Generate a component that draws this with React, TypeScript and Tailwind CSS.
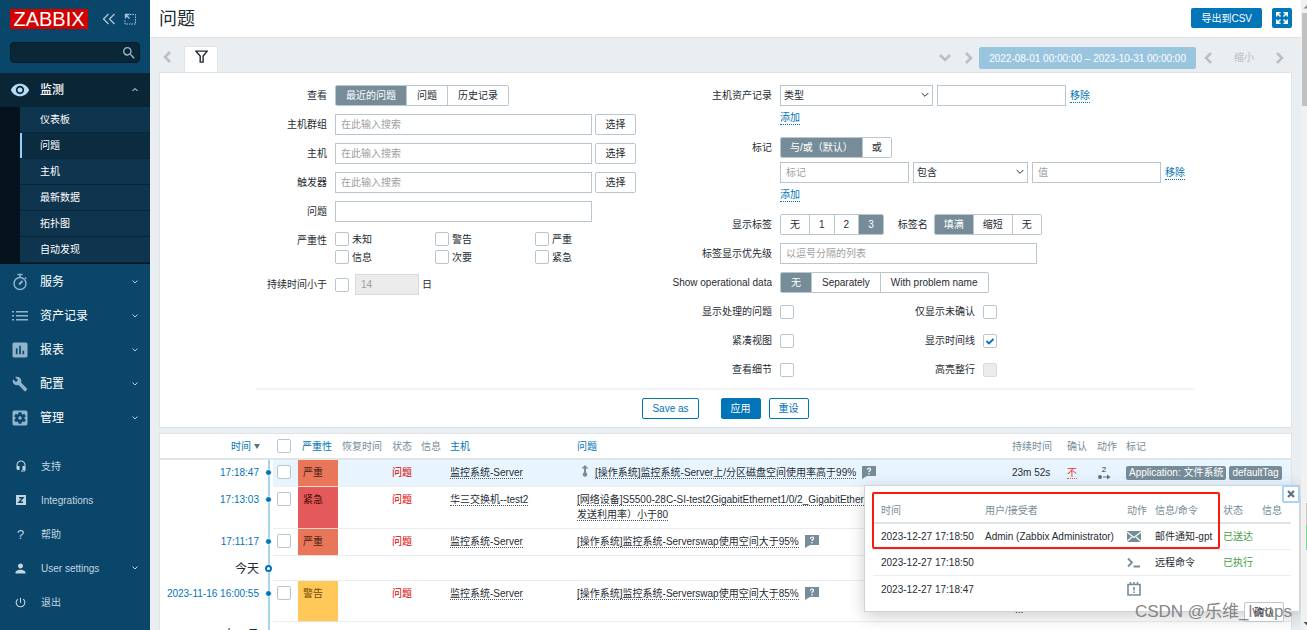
import type { ReactNode } from "react";
import {
  MdBuild,
  MdHeadsetMic,
  MdInsertChart,
  MdPerson,
  MdPowerSettingsNew,
  MdRemoveRedEye,
  MdSearch,
  MdSettingsApplications,
} from "react-icons/md";

type ChevronProps = {
  dir: "up" | "down" | "left" | "right";
  className?: string;
  strokeWidth?: number;
};

const chevronPaths = {
  up: "M1 8l5-5 5 5",
  down: "M1 3l5 5 5-5",
  left: "M8 1L3 6l5 5",
  right: "M4 1l5 5-5 5",
};

function Chevron({ dir, className, strokeWidth = 2 }: ChevronProps) {
  return (
    <svg viewBox="0 0 12 12" className={className} fill="none" stroke="currentColor" strokeWidth={strokeWidth}>
      <path d={chevronPaths[dir]} />
    </svg>
  );
}

const subMenu = ["仪表板", "问题", "主机", "最新数据", "拓扑图", "自动发现"];

const mainMenu = [
  {
    name: "服务",
    icon: (
      <svg viewBox="0 0 18 18" className="h-[18px] w-[18px]" fill="none" stroke="currentColor" strokeWidth="1.5">
        <circle cx="9" cy="10.5" r="6" />
        <path d="M6.5 1.5h5M9 1.5v3M14 4.5l1.2 1.2" />
        <path d="M8 11.5l3.5-3.5" strokeWidth="2" />
      </svg>
    ),
  },
  {
    name: "资产记录",
    icon: (
      <svg viewBox="0 0 18 18" className="h-[18px] w-[18px]" fill="currentColor">
        <path d="M1 4h2v1.5H1zM5 4h12v1.5H5zM1 8h2v1.5H1zM5 8h12v1.5H5zM1 12h2v1.5H1zM5 12h12v1.5H5z" />
      </svg>
    ),
  },
  { name: "报表", icon: <MdInsertChart className="h-5 w-5" /> },
  { name: "配置", icon: <MdBuild className="h-4 w-4" /> },
  { name: "管理", icon: <MdSettingsApplications className="h-5 w-5" /> },
];

const userMenu = [
  { name: "支持", icon: <MdHeadsetMic className="h-3 w-3" /> },
  {
    name: "Integrations",
    icon: (
      <svg viewBox="0 0 10 10" className="h-[10px] w-[10px]">
        <rect width="10" height="10" fill="currentColor" />
        <path d="M3 2.8h4L3 7.2h4" fill="none" stroke="#0a466a" strokeWidth="1.4" />
      </svg>
    ),
  },
  { name: "帮助", icon: <span className="text-[13px]">?</span> },
  { name: "User settings", icon: <MdPerson className="h-[15px] w-[15px]" />, open: true },
  { name: "退出", icon: <MdPowerSettingsNew className="h-[13px] w-[13px]" /> },
];

function Sidebar() {
  return (
    <aside className="w-[150px] shrink-0 bg-[#0a466a] text-white">
      <div className="flex h-[38px] items-center pl-[10px]">
        <a href="#" className="flex h-5 w-[78px] items-center justify-center bg-[#d40000] text-[20px] leading-5">
          ZABBIX
        </a>
        <button type="button" aria-label="收起" className="ml-[14px] text-[#a9c6d8]">
          <svg viewBox="0 0 14 12" className="h-3 w-[14px]" fill="none" stroke="currentColor" strokeWidth="1.3">
            <path d="M6.5 1L1.5 6l5 5M12.5 1l-5 5 5 5" />
          </svg>
        </button>
        <button type="button" aria-label="隐藏" className="ml-2 text-[#a9c6d8]">
          <svg viewBox="0 0 12 12" className="h-3 w-3" fill="none" stroke="currentColor">
            <path d="M6 1.5h5.5V11H1V7" strokeDasharray="1.5 1" />
            <path d="M1.5 5.5v-4h4M1.5 1.5l4 4" strokeWidth="1.3" />
          </svg>
        </button>
      </div>

      <div className="mx-[10px] mt-1 flex h-[21px] items-center rounded-sm border border-[#061b28] bg-[#0a2738]">
        <input type="text" aria-label="搜索" className="h-full min-w-0 flex-1 bg-transparent px-1 text-[10px] outline-none" />
        <button type="button" aria-label="搜索" className="mr-[2px] text-[#9ab9cb]">
          <MdSearch className="h-4 w-4" />
        </button>
      </div>

      <nav className="mt-[10px]">
        <a href="#" className="flex h-[34px] items-center bg-[#0a2535]">
          <span className="flex w-10 justify-center text-[#b5dcf5]">
            <MdRemoveRedEye className="h-5 w-5" />
          </span>
          <span className="flex-1 text-xs font-medium">监测</span>
          <Chevron dir="up" className="mr-3 h-[6px] w-[6px]" />
        </a>
        <ul className="bg-[#03121c] pb-px pl-5">
          {subMenu.map((item) => (
            <li key={item} className="border-b border-[#0a2535]">
              {item === "问题" ? (
                <a href="#" className="flex h-[25px] items-center border-l-2 border-[#8fd0ff] bg-[#0a2b40] pl-[18px] text-[10px]">
                  {item}
                </a>
              ) : (
                <a href="#" className="flex h-[25px] items-center bg-[#0f344e] pl-5 text-[10px]">
                  {item}
                </a>
              )}
            </li>
          ))}
        </ul>
        <div className="pt-px">
          {mainMenu.map((item) => (
            <a key={item.name} href="#" className="flex h-[34px] items-center">
              <span className="flex w-10 justify-center text-[#8fb4cc]">{item.icon}</span>
              <span className="flex-1 text-xs">{item.name}</span>
              <Chevron dir="down" className="mr-3 h-[6px] w-[6px] text-[#b5ccd9]" />
            </a>
          ))}
        </div>
      </nav>

      <nav className="mt-[14px] text-[#c3d5e0]">
        {userMenu.map((item) => (
          <a key={item.name} href="#" className="flex h-[34px] items-center">
            <span className="flex w-[41px] justify-center">{item.icon}</span>
            <span className="flex-1 text-[10px]">{item.name}</span>
            {item.open && <Chevron dir="down" className="mr-3 h-[6px] w-[6px]" />}
          </a>
        ))}
      </nav>
    </aside>
  );
}

function CheckBox({ id, label, checked, disabled }: { id?: string; label?: string; checked?: boolean; disabled?: boolean }) {
  return (
    <span className="relative flex h-[14px] w-[14px] shrink-0">
      <input
        id={id}
        type="checkbox"
        aria-label={label}
        defaultChecked={checked}
        disabled={disabled}
        className="peer h-[14px] w-[14px] appearance-none rounded-[2px] border border-[#b9c6cd] bg-white disabled:border-[#d5dce0] disabled:bg-[#ebebeb]"
      />
      <svg
        viewBox="0 0 14 14"
        className="pointer-events-none absolute inset-0 hidden h-[14px] w-[14px] text-[#0275b8] peer-checked:block"
        fill="none"
        stroke="currentColor"
        strokeWidth="1.8"
      >
        <path d="M3.5 7L6 9.5 10.500 5" />
      </svg>
    </span>
  );
}

function Segments({ name, options, value, compact }: { name: string; options: string[]; value: number; compact?: boolean }) {
  return (
    <div role="radiogroup" aria-label={name} className="flex h-[21px] divide-x divide-[#b9c6cd] overflow-hidden rounded-[2px] border border-[#b9c6cd]">
      {options.map((option, i) => (
        <label
          key={option}
          className={`relative flex items-center bg-white has-checked:bg-[#768d99] has-checked:text-white ${compact ? "px-[9px]" : "px-[10px]"}`}
        >
          <input type="radio" name={name} defaultChecked={i === value} className="sr-only" />
          {option}
        </label>
      ))}
    </div>
  );
}

function TextBox({ id, label, placeholder, className }: { id?: string; label?: string; placeholder?: string; className: string }) {
  return (
    <input
      id={id}
      type="text"
      aria-label={label}
      placeholder={placeholder}
      className={`h-[21px] border border-[#b9c6cd] bg-white px-[5px] placeholder:text-[#a0a0a0] ${className}`}
    />
  );
}

function SelectBox({ label, option, className }: { label: string; option: string; className: string }) {
  return (
    <div className={`relative ${className}`}>
      <select aria-label={label} className="h-[21px] w-full appearance-none border border-[#b9c6cd] bg-white px-[3px]">
        <option>{option}</option>
      </select>
      <Chevron dir="down" strokeWidth={1.5} className="pointer-events-none absolute right-1 top-[6px] h-2 w-2" />
    </div>
  );
}

function TextLink({ children }: { children: ReactNode }) {
  return (
    <a href="#" className="border-b border-dotted border-[#0275b8] leading-[13px] text-[#0275b8]">
      {children}
    </a>
  );
}

function Row({ label, htmlFor, children }: { label: string; htmlFor?: string; children: ReactNode }) {
  return (
    <div className="flex">
      <label htmlFor={htmlFor} className="mr-2 flex h-[21px] w-[132px] shrink-0 items-center justify-end">
        {label}
      </label>
      {children}
    </div>
  );
}

const severities = ["未知", "警告", "严重", "信息", "次要", "紧急"];
const pickers = [
  { id: "groups", label: "主机群组" },
  { id: "hosts", label: "主机" },
  { id: "triggers", label: "触发器" },
];
const options = [
  { id: "suppressed", label: "显示处理的问题", id2: "unack", label2: "仅显示未确认" },
  { id: "compact", label: "紧凑视图", id2: "timeline", label2: "显示时间线", checked: true },
  { id: "details", label: "查看细节", id2: "highlight", label2: "高亮整行", disabled: true },
];

function FilterPanel() {
  return (
    <section className="mx-[9px] border border-[#dfe4e7] bg-white">
      <div className="flex pt-3">
        <div className="flex w-[480px] shrink-0 flex-col gap-2 pl-[35px]">
          <Row label="查看">
            <Segments name="查看" options={["最近的问题", "问题", "历史记录"]} value={0} />
          </Row>
          {pickers.map((picker) => (
            <Row key={picker.id} label={picker.label} htmlFor={picker.id}>
              <TextBox id={picker.id} placeholder="在此输入搜索" className="w-[257px]" />
              <button type="button" className="ml-[3px] h-[21px] w-[41px] rounded-[2px] border border-[#b9c6cd]">
                选择
              </button>
            </Row>
          ))}
          <Row label="问题" htmlFor="problem">
            <TextBox id="problem" className="w-[257px]" />
          </Row>
          <Row label="严重性">
            <div className="grid grid-cols-[100px_100px_60px]">
              {severities.map((severity) => (
                <label key={severity} className="flex h-[18px] items-center gap-[3px]">
                  <CheckBox />
                  {severity}
                </label>
              ))}
            </div>
          </Row>
          <Row label="持续时间小于" htmlFor="age">
            <div className="flex items-center">
              <CheckBox id="age" />
              <input
                type="text"
                aria-label="日"
                disabled
                defaultValue="14"
                className="ml-[6px] mr-[3px] h-[21px] w-16 border border-[#d5dce0] bg-[#ebebeb] px-[5px] text-[#a0a0a0]"
              />
              日
            </div>
          </Row>
        </div>

        <div className="flex flex-1 flex-col gap-2">
          <Row label="主机资产记录">
            <div>
              <div className="flex items-center gap-1">
                <SelectBox label="主机资产记录" option="类型" className="w-[153px]" />
                <TextBox label="资产值" className="w-[129px]" />
                <TextLink>移除</TextLink>
              </div>
              <div className="flex h-[23px] items-center">
                <TextLink>添加</TextLink>
              </div>
            </div>
          </Row>
          <Row label="标记">
            <div>
              <div className="mb-1 flex">
                <Segments name="标记" options={["与/或（默认）", "或"]} value={0} compact />
              </div>
              <div className="flex items-center gap-1">
                <TextBox label="标记" placeholder="标记" className="w-[129px]" />
                <SelectBox label="运算符" option="包含" className="w-[115px]" />
                <TextBox label="值" placeholder="值" className="w-[129px]" />
                <TextLink>移除</TextLink>
              </div>
              <div className="flex h-[23px] items-center">
                <TextLink>添加</TextLink>
              </div>
            </div>
          </Row>
          <Row label="显示标签">
            <Segments name="显示标签" options={["无", "1", "2", "3"]} value={3} compact />
            <span className="ml-[14px] mr-[6px] flex items-center">标签名</span>
            <Segments name="标签名" options={["填满", "缩短", "无"]} value={0} compact />
          </Row>
          <Row label="标签显示优先级" htmlFor="priority">
            <TextBox id="priority" placeholder="以逗号分隔的列表" className="w-[257px]" />
          </Row>
          <Row label="Show operational data">
            <Segments name="Show operational data" options={["无", "Separately", "With problem name"]} value={0} />
          </Row>
          {options.map((option) => (
            <Row key={option.id} label={option.label} htmlFor={option.id}>
              <div className="flex items-center">
                <CheckBox id={option.id} />
                <label htmlFor={option.id2} className="mr-2 w-[181px] text-right">
                  {option.label2}
                </label>
                <CheckBox id={option.id2} checked={option.checked} disabled={option.disabled} />
              </div>
            </Row>
          ))}
        </div>
      </div>

      <div className="mx-24 mt-2 flex justify-center border-t-2 border-[#f2f4f5] pb-2 pt-2">
        <button type="button" className="mr-[22px] h-[21px] rounded-[2px] border border-[#0275b8] px-[9px] text-[#0275b8]">
          Save as
        </button>
        <button type="button" className="mr-2 h-[21px] rounded-[2px] border border-[#0275b8] bg-[#0275b8] px-[9px] text-white">
          应用
        </button>
        <button type="button" className="h-[21px] rounded-[2px] border border-[#0275b8] px-[9px] text-[#0275b8]">
          重设
        </button>
      </div>
    </section>
  );
}

type Problem = {
  time: string;
  severity: string;
  severityStyles: string;
  host: string;
  lines: string[];
  active?: boolean;
  help?: boolean;
  tall?: boolean;
};

const problems: Problem[] = [
  {
    time: "17:18:47",
    severity: "严重",
    severityStyles: "bg-[#e97659] text-[#4b2418]",
    host: "监控系统-Server",
    lines: ["[操作系统]监控系统-Server上/分区磁盘空间使用率高于99%"],
    active: true,
    help: true,
  },
  {
    time: "17:13:03",
    severity: "紧急",
    severityStyles: "bg-[#e45959] text-[#4b0c0c]",
    host: "华三交换机--test2",
    lines: ["[网络设备]S5500-28C-SI-test2GigabitEthernet1/0/2_GigabitEthernet", "发送利用率）小于80"],
  },
  {
    time: "17:11:17",
    severity: "严重",
    severityStyles: "bg-[#e97659] text-[#4b2418]",
    host: "监控系统-Server",
    lines: ["[操作系统]监控系统-Serverswap使用空间大于95%"],
    help: true,
  },
  {
    time: "2023-11-16 16:00:55",
    severity: "警告",
    severityStyles: "bg-[#ffc859] text-[#734d00]",
    host: "监控系统-Server",
    lines: ["[操作系统]监控系统-Serverswap使用空间大于85%"],
    help: true,
    tall: true,
  },
];

const dotted = "border-b border-dotted border-[#4b5c66]";

function TimelineCell({ day }: { day?: boolean }) {
  return (
    <td className="bg-[linear-gradient(#a8d3ee,#a8d3ee)] bg-[length:2px_100%] bg-center bg-no-repeat p-0">
      {day ? (
        <span className="mx-auto block h-[7px] w-[7px] rounded-full border-2 border-[#0275b8] bg-white" />
      ) : (
        <span className="mx-auto mt-[9px] block h-[7px] w-[7px] rounded-full border border-white bg-[#0275b8]" />
      )}
    </td>
  );
}

function ProblemRow({ problem }: { problem: Problem }) {
  const cell = `border-b border-[#ebeef0] px-1 pt-[5px] pb-[6px] ${problem.active ? "bg-[#e8f5ff]" : ""}`;

  return (
    <tr className={`align-top ${problem.tall ? "h-[41px]" : "h-[27px]"}`}>
      <td className="whitespace-nowrap pt-[5px] pr-[5px] text-right">
        <a href="#" className="text-[#0275b8]">
          {problem.time}
        </a>
      </td>
      <TimelineCell />
      <td className={cell}>
        <CheckBox label={problem.time} />
      </td>
      <td className={`border-b border-[#f3d9d0] px-[5px] pt-[5px] ${problem.severityStyles}`}>{problem.severity}</td>
      <td className={cell} />
      <td className={`${cell} text-[#dc0000]`}>问题</td>
      <td className={cell} />
      <td className={cell}>
        <a href="#" className={dotted}>
          {problem.host}
        </a>
      </td>
      <td className={`${cell} overflow-hidden whitespace-nowrap`}>
        {problem.active && (
          <svg viewBox="0 0 8 12" className="ml-1 mr-[6px] inline h-3 w-2 align-top text-[#768d99]" fill="currentColor">
            <path d="M4 0l3.500 3.500H5V8H3V3.500H.5z" />
            <circle cx="4" cy="9.500" r="2.300" />
          </svg>
        )}
        {problem.lines.map((line, i) => (
          <span key={line}>
            {i > 0 && <br />}
            <a href="#" className={dotted}>
              {line}
            </a>
          </span>
        ))}
        {problem.help && (
          <button type="button" aria-label="说明" className="ml-[6px] pt-px align-top">
            <svg viewBox="0 0 14 13" className="h-[13px] w-[14px]">
              <path d="M0 0h14v10H5l-5 3z" fill="#768d99" />
              <path d="M5.500 3.700c0-2.200 3-2.200 3-.3 0 1.200-1.500 1-1.500 2.500M7 7v1.500" fill="none" stroke="#fff" strokeWidth="1.200" />
            </svg>
          </button>
        )}
      </td>
      <td className={cell}>{problem.active && "23m 52s"}</td>
      <td className={cell}>
        {problem.active && (
          <a href="#" className="border-b border-dotted border-[#e45959] text-[#e33734]">
            不
          </a>
        )}
      </td>
      <td className={cell}>
        {problem.active && (
          <button type="button" aria-label="动作" className="flex flex-col items-center text-[8px] leading-[9px]">
            2
            <svg viewBox="0 0 14 6" className="h-[6px] w-[14px] text-[#5b7380]" fill="currentColor">
              <circle cx="3" cy="3" r="2" />
              <path d="M6 2.400h4V.5L13.500 3 10 5.500V3.600H6z" />
            </svg>
          </button>
        )}
      </td>
      <td className={`${cell} whitespace-nowrap`}>
        {problem.active && (
          <span className="flex gap-[3px] pt-px leading-[14px] text-white">
            <span className="rounded-[2px] bg-[#768d99] px-[3px]">Application: 文件系统</span>
            <span className="rounded-[2px] bg-[#768d99] px-[3px]">defaultTag</span>
          </span>
        )}
      </td>
    </tr>
  );
}

function DayRow({ day }: { day: string }) {
  return (
    <tr className="h-[25px]">
      <td className="pr-[5px] text-right text-xs">{day}</td>
      <TimelineCell day />
      <td colSpan={11} className="border-b border-[#ebeef0]" />
    </tr>
  );
}

function MailIcon() {
  return (
    <svg viewBox="0 0 14 11" className="h-[11px] w-[14px]">
      <rect width="14" height="11" fill="#768d99" />
      <path d="M0 1l7 5.500L14 1M0 10.500l5-4.500M14 10.500L9 6" fill="none" stroke="#fff" strokeWidth="1.200" />
    </svg>
  );
}

function CommandIcon() {
  return (
    <svg viewBox="0 0 14 11" className="h-[11px] w-[14px]" fill="none" stroke="#768d99" strokeWidth="1.800">
      <path d="M1 1.500L5 5.500l-4 4M6.500 9.500H13" />
    </svg>
  );
}

function EventIcon() {
  return (
    <svg viewBox="0 0 14 14" className="h-[14px] w-[14px]" fill="none" stroke="#768d99" strokeWidth="1.600">
      <path d="M1 2.500h12V13H1zM3.500 0v3M7 0v3M10.500 0v3M7 5v3.500M7 9.500V11" />
    </svg>
  );
}

const actions = [
  { time: "2023-12-27 17:18:50", user: "Admin (Zabbix Administrator)", icon: <MailIcon />, message: "邮件通知-gpt", status: "已送达" },
  { time: "2023-12-27 17:18:50", user: "", icon: <CommandIcon />, message: "远程命令", status: "已执行" },
  { time: "2023-12-27 17:18:47", user: "", icon: <EventIcon />, message: "", status: "" },
];

function ActionsPopup() {
  return (
    <div className="absolute -right-[9px] top-[51px] w-[436px] border border-[#ccd5d9] bg-white px-2 pb-[9px] pt-3 shadow-[0_4px_16px_rgba(0,0,0,0.2)]">
      <button
        type="button"
        aria-label="关闭"
        className="absolute -right-px -top-px flex h-[18px] w-[18px] items-center justify-center rounded-[2px] border-2 border-[#a8d3f5] bg-white"
      >
        <svg viewBox="0 0 8 8" className="h-2 w-2" stroke="#5b7380" strokeWidth="2.200">
          <path d="M1 1l6 6M7 1L1 7" />
        </svg>
      </button>
      <div className="pointer-events-none absolute left-[7px] top-[6px] h-[57px] w-[348px] rounded-[2px] border-2 border-[#fb1b0e]" />
      <table className="w-full table-fixed border-separate border-spacing-0">
        <colgroup>
          <col className="w-[108px]" />
          <col className="w-[142px]" />
          <col className="w-[28px]" />
          <col className="w-[68px]" />
          <col className="w-[39px]" />
          <col />
        </colgroup>
        <thead>
          <tr className="h-[26px] text-left text-[#768d99]">
            {["时间", "用户/接受者", "动作", "信息/命令", "状态", "信息"].map((head) => (
              <th key={head} className="whitespace-nowrap border-b-2 border-[#dfe4e7] pl-1 font-normal first:pl-2">
                {head}
              </th>
            ))}
          </tr>
        </thead>
        <tbody className="[&>tr:last-child>td]:border-b-0">
          {actions.map((action, i) => (
            <tr key={i} className="h-[26px] whitespace-nowrap [&>td]:border-b [&>td]:border-[#ebeef0] [&>td]:pl-1">
              <td className="first:pl-2!">{action.time}</td>
              <td>{action.user}</td>
              <td>{action.icon}</td>
              <td>{action.message}</td>
              <td className="text-[#429e47]">{action.status}</td>
              <td />
            </tr>
          ))}
        </tbody>
      </table>
    </div>
  );
}

function ProblemTable() {
  return (
    <section className="relative mx-[9px] mt-[5px] border border-[#dfe4e7] bg-white">
      <table className="w-full table-fixed border-separate border-spacing-0">
        <colgroup>
          <col className="w-[104px]" />
          <col className="w-[9px]" />
          <col className="w-[25px]" />
          <col className="w-[40px]" />
          <col className="w-[50px]" />
          <col className="w-[29px]" />
          <col className="w-[29px]" />
          <col className="w-[127px]" />
          <col />
          <col className="w-[55px]" />
          <col className="w-[30px]" />
          <col className="w-[29px]" />
          <col className="w-[169px]" />
        </colgroup>
        <thead>
          <tr className="h-[26px] text-left text-[#768d99] [&>th]:whitespace-nowrap [&>th]:border-b-2 [&>th]:border-[#dfe4e7] [&>th]:px-1 [&>th]:font-normal">
            <th>
              <a href="#" className="flex items-center justify-end gap-[3px] text-[#0275b8]">
                时间
                <svg viewBox="0 0 6 5" className="h-[5px] w-[6px]" fill="#5b7380">
                  <path d="M0 0h6L3 5z" />
                </svg>
              </a>
            </th>
            <th />
            <th>
              <CheckBox label="全选" />
            </th>
            <th>
              <a href="#" className="text-[#0275b8]">
                严重性
              </a>
            </th>
            <th>恢复时间</th>
            <th>状态</th>
            <th>信息</th>
            <th>
              <a href="#" className="text-[#0275b8]">
                主机
              </a>
            </th>
            <th>
              <a href="#" className="text-[#0275b8]">
                问题
              </a>
            </th>
            <th>持续时间</th>
            <th>确认</th>
            <th>动作</th>
            <th>标记</th>
          </tr>
        </thead>
        <tbody>
          {problems.slice(0, 3).map((problem) => (
            <ProblemRow key={problem.time} problem={problem} />
          ))}
          <DayRow day="今天" />
          <ProblemRow problem={problems[3]} />
          <DayRow day="十一月" />
        </tbody>
      </table>

      <span className="absolute left-[855px] top-[168px]">...</span>
      <ActionsPopup />
      <button type="button" className="absolute right-[7px] top-[168px] h-5 w-10 rounded-[2px] border border-[#b9c6cd] bg-white">
        确认
      </button>
      <span className="pointer-events-none absolute -right-px top-[168px] text-[17px] leading-5 text-[#777777]/90">
        CSDN @乐维_lwops
      </span>
    </section>
  );
}

function TimeBar() {
  return (
    <div className="flex h-[34px] items-end px-[9px]">
      <button type="button" aria-label="上一个" className="flex h-[30px] w-[25px] items-center pl-[3px] text-[#b3c0c7]">
        <Chevron dir="left" strokeWidth={2.5} className="h-3 w-3" />
      </button>
      <button type="button" aria-label="过滤器" className="flex h-[26px] w-[34px] justify-center border border-b-0 border-[#dfe4e7] bg-white pt-[3px]">
        <svg viewBox="0 0 12 12" className="h-[13px] w-[13px]" fill="none" stroke="#1f2c33" strokeWidth="1.300">
          <path d="M.8 1h10.400L7.500 5.500V11.200H4.800V5.500z" />
        </svg>
      </button>
      <div className="ml-auto flex h-[25px] items-start text-[#b3c0c7]">
        <button type="button" aria-label="展开" className="flex h-[21px] w-[22px] items-center justify-center">
          <Chevron dir="down" strokeWidth={2.5} className="h-3 w-3" />
        </button>
        <button type="button" aria-label="下一个" className="flex h-[21px] w-[23px] items-center justify-center">
          <Chevron dir="right" strokeWidth={2.5} className="h-3 w-3" />
        </button>
        <button type="button" className="h-[22px] rounded-[2px] bg-[#9ac5de] px-[10px] text-white">
          2022-08-01 00:00:00 – 2023-10-31 00:00:00
        </button>
        <button type="button" aria-label="向前" className="flex h-[21px] w-[26px] items-center justify-center">
          <Chevron dir="left" strokeWidth={2.5} className="h-3 w-3" />
        </button>
        <button type="button" className="h-[21px] w-11">
          缩小
        </button>
        <button type="button" aria-label="向后" className="flex h-[21px] w-[26px] items-center justify-center">
          <Chevron dir="right" strokeWidth={2.5} className="h-3 w-3" />
        </button>
      </div>
    </div>
  );
}

function ScrollTrack() {
  return (
    <div className="flex w-[6px] shrink-0 flex-col bg-[#f1f1f1] pl-px">
      <svg viewBox="0 0 5 12" className="h-[13px] w-[5px]" fill="#8b8b8b">
        <path d="M1.500 8L5 4.500V8z" />
      </svg>
      <div className="h-[93px] bg-[#c1c1c1]" />
      <div className="mt-auto mb-[67px] flex h-[47px] w-px flex-col self-end bg-[#c8c8c8]">
        <div className="mt-auto h-[25px] bg-[#7fd493]" />
      </div>
      <svg viewBox="0 0 5 12" className="h-[13px] w-[5px]" fill="#505050">
        <path d="M1.500 4.500L5 8V4.500z" />
      </svg>
    </div>
  );
}

export default function App() {
  return (
    <div className="flex h-screen overflow-hidden bg-[#ebeef0] font-['Liberation_Sans','Noto_Sans_CJK_SC',sans-serif] text-[10px] leading-[15px] text-[#1f2c33]">
      <Sidebar />
      <main className="min-w-0 flex-1 overflow-hidden">
        <header className="flex h-[38px] items-center border-b border-[#dfe4e7] bg-white px-[9px]">
          <h1 className="flex-1 text-lg">问题</h1>
          <button type="button" className="mb-px h-5 rounded-[2px] bg-[#0275b8] px-[10px] text-white">
            导出到CSV
          </button>
          <button
            type="button"
            aria-label="全屏"
            className="mb-px ml-[10px] flex h-5 w-5 items-center justify-center rounded-[2px] bg-[#0275b8] text-white"
          >
            <svg viewBox="0 0 12 12" className="h-3 w-3" fill="none" stroke="currentColor" strokeWidth="1.500">
              <path d="M.8 4.500V.8h3.700M1 1l3.500 3.500M7.500.8h3.700v3.700M11 1L7.500 4.500M.8 7.500v3.700h3.700M1 11l3.500-3.500M11.200 7.500v3.700H7.500M11 11L7.500 7.500" />
            </svg>
          </button>
        </header>
        <TimeBar />
        <FilterPanel />
        <ProblemTable />
      </main>
      <ScrollTrack />
    </div>
  );
}
